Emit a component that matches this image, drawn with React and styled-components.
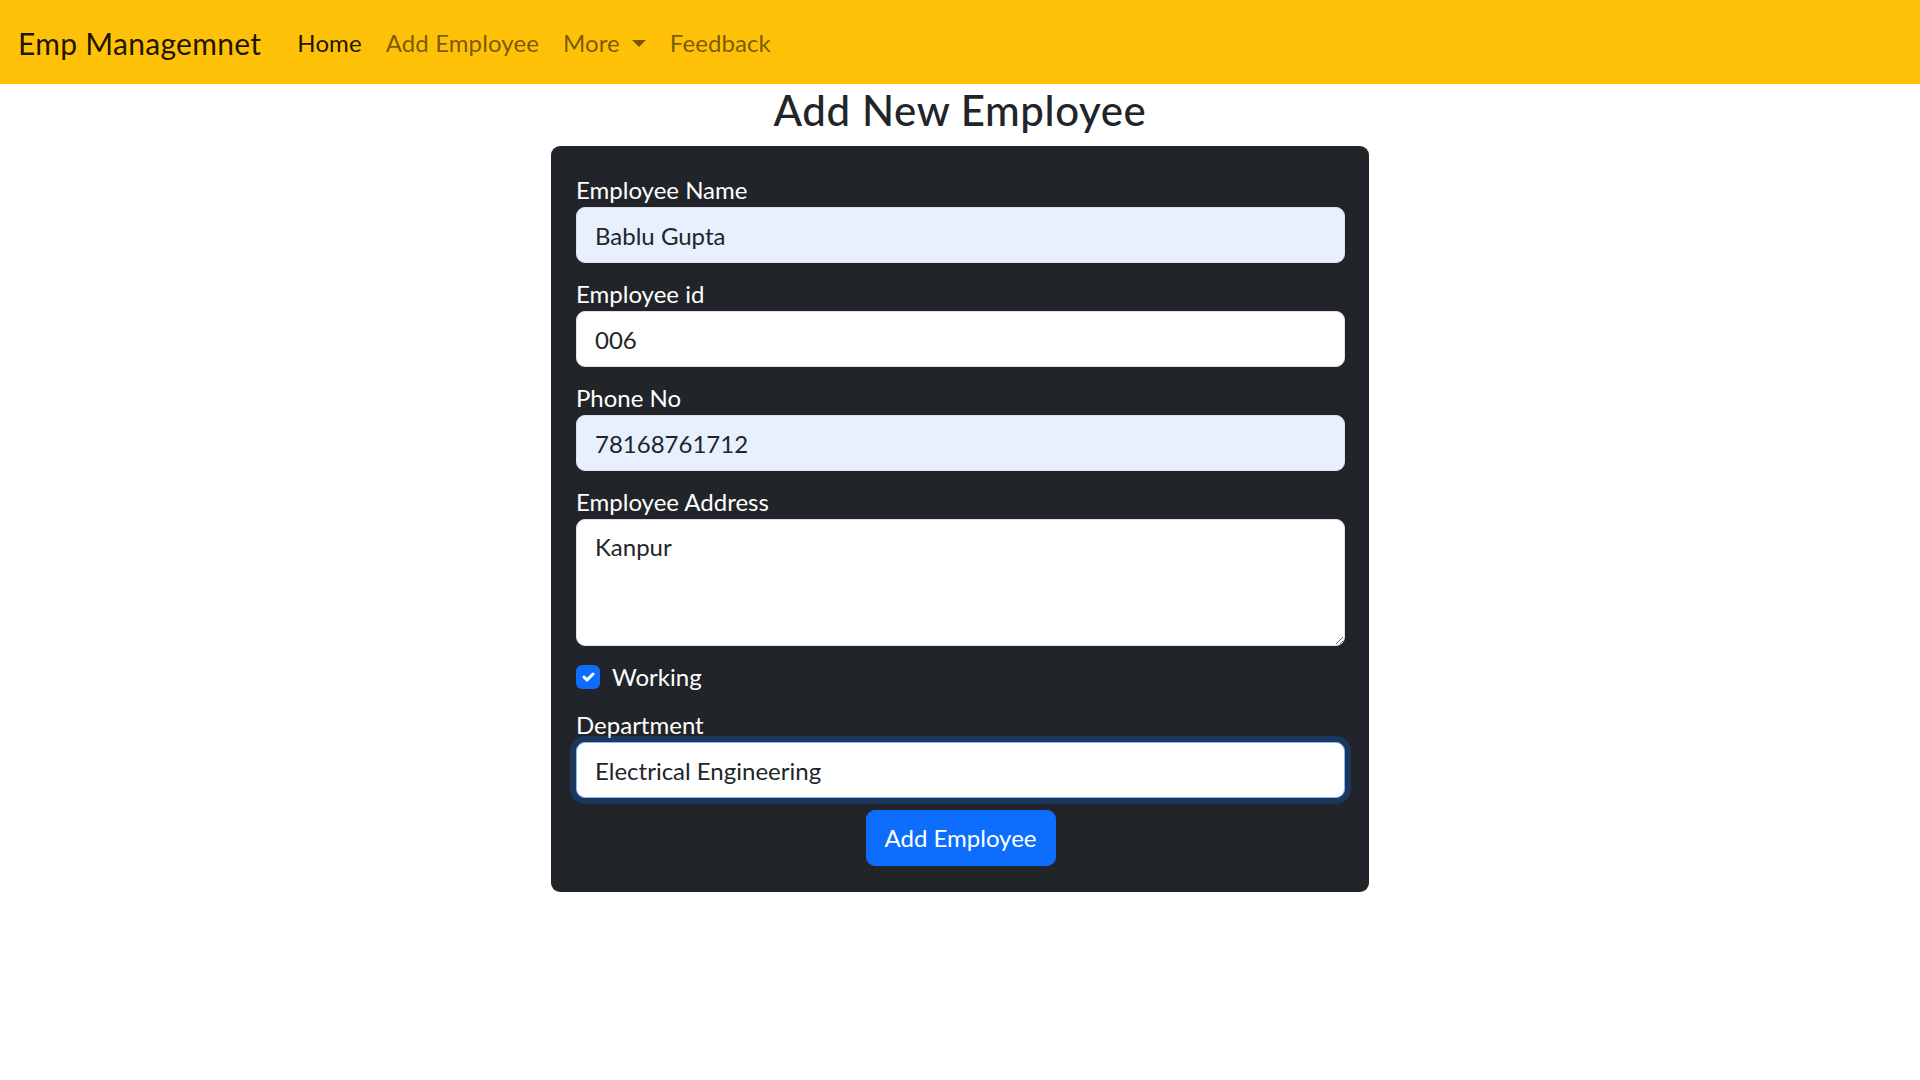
import React from 'react';
import styled, { createGlobalStyle, css } from 'styled-components';

const font = `Lato, "Liberation Sans", sans-serif`;

const GlobalStyle = createGlobalStyle`
  body {
    margin: 0;
    background: #fff;
    font-family: ${font};
    color: #212529;
  }
  * { box-sizing: border-box; }
`;

const Navbar = styled.nav`
  background-color: #ffc107;
  height: 84px;
  padding: 2px 18px 0;
  display: flex;
  align-items: center;
`;

const Brand = styled.a`
  font-size: 30px;
  line-height: 45px;
  letter-spacing: 0.3px;
  color: rgba(0, 0, 0, 0.9);
  margin-right: 24px;
  text-decoration: none;
`;

const NavList = styled.ul`
  display: flex;
  list-style: none;
  margin: 0;
  padding: 0;
`;

const NavLink = styled.a`
  display: flex;
  align-items: center;
  padding: 12px;
  font-size: 24px;
  line-height: 36px;
  letter-spacing: 0.1px;
  text-decoration: none;
  color: ${(p) => (p.$active ? 'rgba(0, 0, 0, 0.9)' : 'rgba(0, 0, 0, 0.55)')};
`;

const Caret = styled.span`
  display: inline-block;
  margin-left: 12px;
  border-top: 7px solid currentColor;
  border-left: 7px solid transparent;
  border-right: 7px solid transparent;
`;

const Main = styled.main`
  display: flex;
  flex-direction: column;
  align-items: center;
`;

const Title = styled.h3`
  margin: 0 0 12px;
  padding-top: 3px;
  font-size: 42px;
  line-height: 47px;
  font-weight: 500;
  letter-spacing: 0.6px;
  color: #212529;
`;

const Card = styled.form`
  width: 818px;
  background-color: #212529;
  border-radius: 9px;
  padding: 25px 24px 26px 25px;
  display: flex;
  flex-direction: column;
`;

const Group = styled.div`
  margin-bottom: 12px;
  display: flex;
  flex-direction: column;
`;

const Label = styled.label`
  color: #fff;
  font-size: 24px;
  line-height: 34px;
  padding-top: 2px;
`;

const fieldBase = css`
  width: 100%;
  font-family: ${font};
  font-size: 24px;
  line-height: 36px;
  color: #212529;
  padding: 9px 18px;
  border: 1px solid #dee2e6;
  border-radius: 9px;
  outline: none;
  background-color: ${(p) => (p.$autofill ? '#e8f0fe' : '#fff')};
  ${(p) =>
    p.$focused &&
    css`
      border-color: #86b7fe;
      box-shadow: 0 0 0 6px rgba(13, 110, 253, 0.25);
    `}
`;

const Input = styled.input`
  ${fieldBase}
  height: 56px;
`;

const TextArea = styled.textarea`
  ${fieldBase}
  height: 127px;
  resize: vertical;
  display: block;
`;

const Check = styled.label`
  display: flex;
  align-items: center;
  gap: 12px;
  min-height: 36px;
  padding-top: 2px;
  margin-bottom: 12px;
  color: #fff;
  font-size: 24px;
  line-height: 34px;
`;

const CheckBox = styled.span`
  width: 24px;
  height: 24px;
  border-radius: 6px;
  background-color: #0d6efd;
  display: flex;
  align-items: center;
  justify-content: center;
`;

const ButtonRow = styled.div`
  display: flex;
  justify-content: center;
`;

const Button = styled.button`
  font-family: ${font};
  font-size: 24px;
  line-height: 36px;
  height: 56px;
  padding: 9px 18px;
  border: 1px solid #0d6efd;
  border-radius: 9px;
  background-color: #0d6efd;
  color: #fff;
`;

const Field = ({ label, value, autofill, focused }) => (
  <Group>
    <Label>{label}</Label>
    <Input defaultValue={value} $autofill={autofill} $focused={focused} />
  </Group>
);

export default function App() {
  return (
    <>
      <GlobalStyle />
      <Navbar>
        <Brand href="#">Emp Managemnet</Brand>
        <NavList>
          <li><NavLink $active href="#">Home</NavLink></li>
          <li><NavLink href="#">Add Employee</NavLink></li>
          <li><NavLink href="#">More<Caret /></NavLink></li>
          <li><NavLink href="#">Feedback</NavLink></li>
        </NavList>
      </Navbar>
      <Main>
        <Title>Add New Employee</Title>
        <Card onSubmit={(e) => e.preventDefault()}>
          <Field label="Employee Name" value="Bablu Gupta" autofill />
          <Field label="Employee id" value="006" />
          <Field label="Phone No" value="78168761712" autofill />
          <Group>
            <Label>Employee Address</Label>
            <TextArea defaultValue="Kanpur" />
          </Group>
          <Check>
            <CheckBox>
              <svg width="20" height="20" viewBox="0 0 20 20">
                <path d="m6 10 3 3 6-6" fill="none" stroke="#fff" strokeWidth="3" strokeLinecap="round" strokeLinejoin="round" />
              </svg>
            </CheckBox>
            Working
          </Check>
          <Field label="Department" value="Electrical Engineering" focused />
          <ButtonRow>
            <Button type="submit">Add Employee</Button>
          </ButtonRow>
        </Card>
      </Main>
    </>
  );
}
